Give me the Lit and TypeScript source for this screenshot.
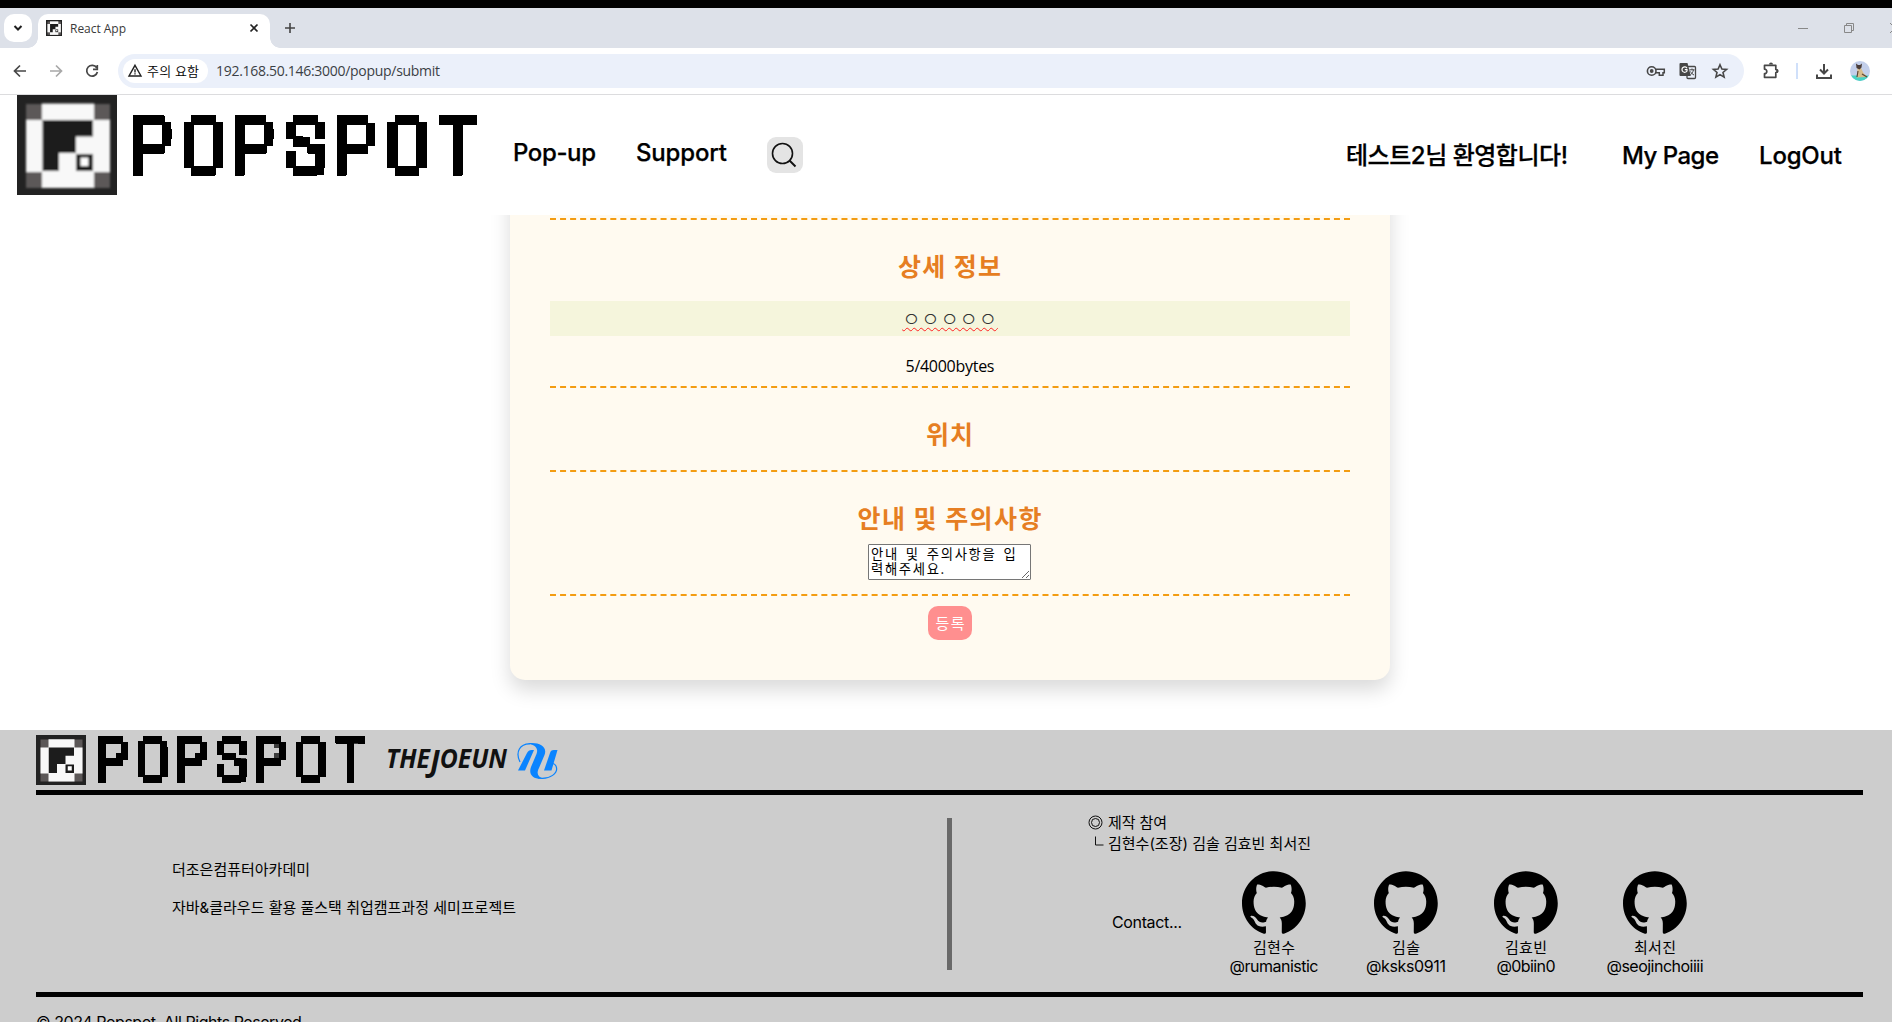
import { LitElement, html, css, svg } from "lit";
import { customElement, property } from "lit/decorators.js";

/** Inline label whose letter spacing is adjusted so that it spans exactly `w` pixels. */
@customElement("fit-text")
class FitText extends LitElement {
  @property({ type: Number }) w = 0;
  static styles = css`
    :host { display: inline-block; white-space: nowrap; flex: none; }
    .run { display: inline-block; white-space: pre; }
  `;
  firstUpdated() {
    const run = this.renderRoot.querySelector(".run") as HTMLElement;
    const n = Math.max(1, (this.textContent ?? "").length - 1);
    const natural = run.getBoundingClientRect().width;
    this.style.width = `${this.w}px`;
    run.style.letterSpacing = `${(this.w - natural) / n}px`;
  }
  render() {
    return html`<span class="run"><slot></slot></span>`;
  }
}

/** Square pixel-art emblem. */
@customElement("pop-mark")
class PopMark extends LitElement {
  static styles = css`
    :host { display: block; flex: none; }
    svg { display: block; width: 100%; height: 100%; }
  `;
  render() {
    return html`<svg viewBox="0 0 100 100">
      <defs><filter id="soft"><feGaussianBlur stdDeviation="0.8" /></filter></defs>
      <rect width="100" height="100" fill="#222" />
      <g filter="url(#soft)">
        <rect x="9" y="9" width="84" height="84" fill="#5c5959" />
        <rect x="25" y="8.500" width="52" height="84.500" fill="#f8f8f8" />
        <rect x="9" y="25" width="84" height="52" fill="#f8f8f8" />
        <path d="M25.500 25H76V41.500H59V58H42V76H25.500z" fill="#1c1c1c" />
        <rect x="59" y="59" width="17" height="17" fill="#1c1c1c" />
        <rect x="63.500" y="62.500" width="8" height="8.500" fill="#fff" />
      </g>
    </svg>`;
  }
}

/** Per-letter horizontal scale, vertical scale and offset of the letter centre. */
const LETTERS: Record<string, [number, number, number]> = {
  P: [0.85, 1, -1.4],
  O: [0.81, 1.03, 0],
  S: [0.87, 1.01, 0],
  T: [0.72, 1, 0],
};

/** Wordmark: thin text sampled on a 5x8 grid per letter and thickened to square pixels. */
@customElement("pop-word")
class PopWord extends LitElement {
  /** Growth of straight letters before sampling. */
  @property() straight = "1.3 1.3";
  /** Growth of round letters before sampling. */
  @property() round = "2 1.6";
  static styles = css`
    :host { display: block; flex: none; }
    svg { display: block; width: 100%; height: 100%; overflow: visible; }
    text { font-family: Roboto, "Liberation Sans", sans-serif; font-weight: 100; font-size: 74.5px; }
  `;
  render() {
    const letters = (set: string) =>
      [..."POPSPOT"].map((ch, i) => {
        if (!set.includes(ch)) return null;
        const [sx, sy, dx] = LETTERS[ch];
        return svg`<text text-anchor="middle" y="26.4" transform="translate(${19.5 + dx + 50.9 * i} 30.1) scale(${sx} ${sy})">${ch}</text>`;
      });
    return html`<svg viewBox="0 0 345 61">
      <defs>
        <filter id="grow" filterUnits="userSpaceOnUse" x="-10" y="-10" width="370" height="85">
          <feMorphology operator="dilate" radius=${this.straight} />
        </filter>
        <filter id="growround" filterUnits="userSpaceOnUse" x="-10" y="-10" width="370" height="85">
          <feMorphology operator="dilate" radius=${this.round} />
        </filter>
        <filter id="pixel" filterUnits="userSpaceOnUse" x="-10" y="-10" width="370" height="85">
          <feComponentTransfer><feFuncA type="linear" slope="60" intercept="-19" /></feComponentTransfer>
          <feMorphology operator="dilate" radius="4" />
        </filter>
        <pattern id="dots" patternUnits="userSpaceOnUse" x="1.365" y="1.065" width="7.27" height="7.27">
          <rect x="2.735" y="2.735" width="1.8" height="1.8" fill="#fff" />
        </pattern>
        <mask id="grid" maskUnits="userSpaceOnUse" x="-10" y="-10" width="370" height="85">
          <rect x="-10" y="-10" width="370" height="85" fill="url(#dots)" />
        </mask>
      </defs>
      <g filter="url(#pixel)"><g mask="url(#grid)">
        <g filter="url(#grow)">${letters("PT")}</g>
        <g filter="url(#growround)">${letters("OS")}</g>
      </g></g>
    </svg>`;
  }
}

const OCTOCAT =
  "M48.854 0C21.839 0 0 22 0 49.217c0 21.756 13.993 40.172 33.405 46.69 2.427.49 3.316-1.059 3.316-2.362 0-1.141-.08-5.052-.08-9.127-13.59 2.934-16.42-5.867-16.42-5.867-2.184-5.704-5.42-7.17-5.42-7.17-4.448-3.015.324-3.015.324-3.015 4.934.326 7.523 5.052 7.523 5.052 4.367 7.496 11.404 5.378 14.235 4.074.404-3.178 1.699-5.378 3.074-6.6-10.839-1.141-22.243-5.378-22.243-24.283 0-5.378 1.94-9.778 5.014-13.2-.485-1.222-2.184-6.275.486-13.038 0 0 4.125-1.304 13.426 5.052a46.97 46.97 0 0 1 12.214-1.63c4.125 0 8.33.571 12.213 1.63 9.302-6.356 13.427-5.052 13.427-5.052 2.67 6.763.97 11.816.485 13.038 3.155 3.422 5.015 7.822 5.015 13.2 0 18.905-11.404 23.06-22.324 24.283 1.78 1.548 3.316 4.481 3.316 9.126 0 6.6-.08 11.897-.08 13.526 0 1.304.89 2.853 3.316 2.364 19.412-6.52 33.405-24.935 33.405-46.691C97.707 22 75.788 0 48.854 0z";

const icons: Record<string, unknown> = {
  chevron: svg`<path d="M6.500 8l3.500 3.500L13.500 8" stroke-width="2" />`,
  close: svg`<path d="M6.500 6.500l7 7M13.500 6.500l-7 7" stroke-width="1.700" />`,
  plus: svg`<path d="M10 5v10M5 10h10" stroke-width="1.600" />`,
  back: svg`<path d="M16 10H5M10 4.500L4.500 10l5.500 5.500" stroke-width="1.700" />`,
  forward: svg`<path d="M4 10h11M10 4.500L15.500 10 10 15.500" stroke-width="1.700" />`,
  reload: svg`<path d="M14.700 6.800A5.400 5.400 0 1 0 15.400 11M15.300 4v4.300H11" stroke-width="1.700" />`,
  warn: svg`<path d="M10 4.300L16 15H4z M10 8.200v3.200M10 12.300v1.300" stroke-width="1.400" />`,
  key: svg`<circle cx="5.700" cy="10" r="4.300" stroke-width="1.600" /><circle cx="5.700" cy="10" r="1.900" fill="currentColor" stroke="none" /><path d="M9.500 8.300H18.300V11.700H17V14.300H13.300V11.700H9.500" stroke-width="1.500" />`,
  star: svg`<path d="M10 3.700l1.900 4.300 4.700.4-3.600 3.100 1.100 4.600L10 13.600l-4.100 2.500L7 11.500 3.400 8.400l4.700-.4z" stroke-width="1.600" />`,
  puzzle: svg`<path d="M3.500 4.300H14.800V8.500a1.600 1.600 0 0 1 0 3.200V16.300H3.500V12.700a2.300 2.300 0 0 0 0-4.600z" stroke-width="1.700" stroke-linejoin="round" /><path d="M8 3.600a2 2 0 0 1 4 0zM15.500 8a2 2 0 0 1 0 4.200z" fill="currentColor" stroke="none" />`,
  download: svg`<path d="M10 3v9M6 8.500l4 4 4-4M3 13.500V17H17V13.500" stroke-width="2" />`,
  restore: svg`<path d="M5.500 7.500h7v7h-7zM7.500 7.500v-2h7v7h-2" stroke-width="1" />`,
};

const icon = (name: string) => html`<svg class="ico" viewBox="0 0 20 20">${icons[name]}</svg>`;

const people = [
  { name: "김현수", nw: 42, id: "@rumanistic", w: 89, cls: "p1" },
  { name: "김솔", nw: 28, id: "@ksks0911", w: 80, cls: "p2" },
  { name: "김효빈", nw: 42, id: "@0biin0", w: 59, cls: "p3" },
  { name: "최서진", nw: 42, id: "@seojinchoiiii", w: 97, cls: "p4" },
];

@customElement("app-root")
class AppRoot extends LitElement {
  static styles = css`
    :host { display: block; height: 1022px; overflow: hidden; background: #fff; color: #000;
      font-family: Inter, "Noto Sans CJK KR", sans-serif; }
    * { box-sizing: border-box; }
    .page { width: 1892px; height: 1022px; overflow: hidden; display: flex; flex-direction: column; }
    .ico { width: 20px; height: 20px; display: block; flex: none; fill: none; stroke: currentColor; }
    .sys { font-family: "Open Sans", "Noto Sans CJK KR", sans-serif; }

    /* browser frame */
    .strip { height: 48px; flex: none; border-top: 8px solid #000; background: #dde1e9; display: flex; align-items: flex-start; padding: 6px 0 0 4px; color: #333; }
    .tabs { width: 28px; height: 28px; border-radius: 10px; background: #fff; display: grid; place-items: center; color: #1f1f1f; }
    .tab { position: relative; margin-left: 6px; width: 232px; height: 34px; border-radius: 10px 10px 0 0; background: #fff; display: flex; align-items: center; padding: 0 6px 6px 8px; color: #222; }
    .tab::before, .tab::after { content: ""; position: absolute; bottom: 0; width: 10px; height: 10px; }
    .tab::before { left: -10px; background: radial-gradient(circle at 0 0, transparent 9.5px, #fff 10px); }
    .tab::after { right: -10px; background: radial-gradient(circle at 100% 0, transparent 9.5px, #fff 10px); }
    .fav { width: 16px; height: 16px; }
    .title { margin-left: 8px; flex: 1; font-size: 12px; line-height: 18px; padding-top: 2px; color: #3a3a3a; }
    .plus { margin: 4px 0 0 10px; color: #444; }
    .win { margin-left: auto; display: flex; padding-top: 4px; color: #888; width: 100px; flex: none; overflow: hidden; }
    .min { width: 10px; height: 1px; flex: none; background: #888; margin: 10px 31px 0 6px; }
    .wclose { margin-left: 26px; flex: none; }
    .bar { height: 47px; flex: none; border-bottom: 1px solid #dcdcde; display: flex; align-items: center; padding: 0 22px 0 10px; color: #474747; }
    .fwd { margin: 0 16px; color: #a8a8a8; }
    .omni { margin-left: 16px; width: 1626px; height: 34px; border-radius: 17px; background: #ebf0fa; display: flex; align-items: center; padding: 0 14px 0 5px; }
    .chip { height: 24px; width: 85px; border-radius: 12px; background: #fff; display: flex; align-items: center; padding-left: 2px; font-size: 13px; color: #222; line-height: 20px; }
    .chip fit-text { margin-left: 2px; font-weight: 350; color: #000; }
    .url { margin-left: 8px; flex: 1; font-size: 14px; line-height: 20px; color: #3b3f45; }
    .g { width: 20px; height: 20px; margin: 0 12px; }
    .puz { margin-left: 17px; }
    .sep { width: 2px; height: 16px; background: #d0e0fa; margin: 0 16px 0 15px; }
    .avatar { width: 20px; height: 20px; margin-left: 16px; flex: none; }

    /* site header */
    .head { height: 120px; flex: none; background: #fff; display: flex; align-items: flex-start; padding-left: 17px; position: relative; z-index: 1; }
    .head .mark { width: 100px; height: 100px; }
    .head .word { width: 345px; height: 61px; margin: 20px 0 0 16px; }
    .nav { display: flex; font-weight: 500; font-size: 24px; line-height: 30px; -webkit-text-stroke: 0.25px #000; }
    .left { margin: 42px 0 0 35px; gap: 40px; flex: 1; align-items: flex-start; }
    .left fit-text { margin-top: 1px; }
    .find { width: 36px; height: 36px; border-radius: 9px; background: #e4e4e4; }
    .find svg { width: 36px; height: 36px; display: block; fill: none; stroke: #111; stroke-width: 1.600; }
    .right { margin-top: 46px; padding-right: 50px; }
    .hello { margin-right: 54px; }
    .my { margin-right: 40px; }

    /* form card */
    .main { height: 515px; flex: none; padding: 0 0 50px 510px; }
    .card { width: 880px; height: 525px; margin-top: -60px; border-radius: 15px; background: #fffaf0; box-shadow: 0 10px 20px rgba(0, 0, 0, 0.15); padding: 63px 40px 0; display: flex; flex-direction: column; align-items: center; }
    .rule { width: 800px; height: 2px; flex: none; border-top: 2px dashed #f39c12; }
    .r3 { margin-top: 19px; }
    .r4 { margin-top: 14px; }
    h2 { margin: 27px 0 0; font-family: "Noto Sans CJK KR", sans-serif; font-weight: 700; font-size: 25px; line-height: 36px; color: #e67e22; padding-right: 1px; }
    .field { margin-top: 18px; width: 800px; height: 35px; flex: none; background: #f5f5dc; text-align: center; font-size: 20px; line-height: 35px; color: #333; font-weight: 300; font-family: "Noto Sans CJK KR", sans-serif; }
    .typo { text-decoration: underline wavy #f22 1.2px; text-underline-offset: 0; text-decoration-skip-ink: none; letter-spacing: 0.750px; }
    .count { margin-top: 20px; height: 30px; font-size: 16px; line-height: 20px; }
    textarea { margin: 9px 1px 0 0; width: 163px; height: 36px; flex: none; padding: 1px 2px 2px; border: 1px solid #767676; border-radius: 1px; background: #fff; color: #000; font: 13.333px/15px "Noto Sans CJK KR", monospace; letter-spacing: 1.650px; word-spacing: 2.400px; overflow: hidden; }
    button { margin-top: 10px; width: 44px; height: 34px; flex: none; border: 0; border-radius: 10px; padding: 0; background: #ff8f8f; color: #fff; font-size: 15px; line-height: 34px; }

    /* footer */
    .foot { height: 292px; flex: none; background: #cdcdcd; padding: 5px 29px 0 36px; display: flex; flex-direction: column; }
    .brand { height: 60px; flex: none; border-bottom: 5px solid #000; display: flex; }
    .foot .mark { width: 50px; height: 50px; }
    .foot .word { width: 268px; height: 47.400px; margin: 1px 0 0 12px; filter: drop-shadow(0 0 0.600px #fff) drop-shadow(0 0 0.500px #fff); }
    .joeun { width: 180px; height: 48px; margin: 4px 0 0 18px; overflow: visible; }
    .joeun text { font-family: "Open Sans", "Noto Sans", sans-serif; font-weight: 700; font-style: italic; fill: #111; }
    .info { height: 202px; flex: none; border-bottom: 5px solid #000; display: flex; font-size: 15px; }
    .about { width: 775px; margin-left: 136px; padding-top: 65px; display: flex; flex-direction: column; gap: 18px; line-height: 20px; }
    .vline { width: 5px; height: 152px; margin-top: 23px; background: #696969; }
    .credit { margin: 17px 0 0 136px; }
    .made { line-height: 21px; display: flex; flex-direction: column; align-items: flex-start; }
    .made div { display: flex; }
    .sym { width: 20px; height: 21px; flex: none; display: flex; align-items: center; }
    .sym svg { width: 20px; height: 21px; fill: none; stroke: #111; }
    .team { display: flex; align-items: flex-start; margin-top: 17px; }
    .contact { margin: 42px 0 0 24px; line-height: 18px; font-size: 16px; }
    .person { display: flex; flex-direction: column; align-items: center; font-size: 16px; line-height: 19px; width: 100px; }
    .person svg { width: 64px; height: 63px; margin-bottom: 4px; }
    .person .nm { font-size: 15px; line-height: 19px; }
    .p1 { margin-left: 42px; } .p2 { margin-left: 32px; } .p3 { margin-left: 20px; } .p4 { margin-left: 29px; }
    .copy { padding-top: 15px; font-size: 16px; line-height: 20px; white-space: nowrap; }
  `;

  private chrome() {
    return html`
      <div class="strip sys">
        <div class="tabs">${icon("chevron")}</div>
        <div class="tab">
          <pop-mark class="fav"></pop-mark>
          <div class="title"><fit-text w="56">React App</fit-text></div>
          ${icon("close")}
        </div>
        <div class="plus">${icon("plus")}</div>
        <div class="win">
          <div class="min"></div>
          ${icon("restore")}
          <svg class="ico wclose" viewBox="0 0 20 20"><path d="M5 5l10 10M15 5L5 15" /></svg>
        </div>
      </div>
      <div class="bar sys">
        ${icon("back")}
        <div class="fwd">${icon("forward")}</div>
        ${icon("reload")}
        <div class="omni">
          <div class="chip">${icon("warn")}<fit-text w="52">주의 요함</fit-text></div>
          <div class="url"><fit-text w="224">192.168.50.146:3000/popup/submit</fit-text></div>
          ${icon("key")}
          <svg class="g" viewBox="0 0 20 20">
            <rect x="9" y="5.500" width="8.500" height="12" rx="1" fill="none" stroke="#474747" stroke-width="1.300" />
            <path d="M2.500 2H9.500L12.800 15H2.500a1 1 0 0 1-1-1V3a1 1 0 0 1 1-1z" fill="#474747" />
            <path d="M9 7.200A2.700 2.700 0 1 0 9 10V8.700H6.800" fill="none" stroke="#fff" stroke-width="1.200" />
            <path d="M11.500 8.800h5M14 7.500v1.300M15.500 8.800c-.5 2.500-2 4-3 5M12.500 10.500c.5 1.300 2 2.800 3.500 3.500" fill="none" stroke="#474747" stroke-width="1" />
          </svg>
          ${icon("star")}
        </div>
        <div class="puz">${icon("puzzle")}</div>
        <div class="sep"></div>
        ${icon("download")}
        <svg class="avatar" viewBox="0 0 20 20">
          <defs><clipPath id="round"><circle cx="10" cy="10" r="10" /></clipPath></defs>
          <g clip-path="url(#round)">
            <rect width="20" height="20" fill="#c3cfea" />
            <rect y="14.500" width="20" height="6" fill="#48d3c4" />
            <path d="M7.500 7h3.500l2.500 5 3.500 4-10 .5z" fill="#d8bd8c" />
            <path d="M6 2.500l2 1.500h2l2-1.500-.5 4L9.500 8.500 6.500 7z" fill="#493c38" />
            <path d="M8 10l-1 6M12 13l5 3" stroke="#5b4536" stroke-width="1.200" />
          </g>
        </svg>
      </div>`;
  }

  render() {
    return html`<div class="page">
      ${this.chrome()}
      <header class="head">
        <pop-mark class="mark"></pop-mark>
        <pop-word class="word"></pop-word>
        <nav class="nav left">
          <fit-text w="83">Pop-up</fit-text>
          <fit-text w="91">Support</fit-text>
          <div class="find"><svg viewBox="0 0 36 36"><circle cx="15.500" cy="16.500" r="10" /><path d="M22.500 23.500l6 6" stroke-width="1.900" /></svg></div>
        </nav>
        <nav class="nav right">
          <fit-text class="hello" w="222">테스트2님 환영합니다!</fit-text>
          <fit-text class="my" w="97">My Page</fit-text>
          <fit-text w="83">LogOut</fit-text>
        </nav>
      </header>
      <main class="main">
        <section class="card">
          <div class="rule"></div>
          <h2><fit-text w="103">상세 정보</fit-text></h2>
          <div class="field"><span class="typo">ㅇㅇㅇㅇㅇ</span></div>
          <div class="count sys"><fit-text w="89">5/4000bytes</fit-text></div>
          <div class="rule"></div>
          <h2><fit-text w="47">위치</fit-text></h2>
          <div class="rule r3"></div>
          <h2><fit-text w="184">안내 및 주의사항</fit-text></h2>
          <textarea spellcheck="false" .value=${"안내 및 주의사항을 입력해주세요."}></textarea>
          <div class="rule r4"></div>
          <button class="sys"><fit-text w="29">등록</fit-text></button>
        </section>
      </main>
      <footer class="foot">
        <div class="brand">
          <pop-mark class="mark"></pop-mark>
          <pop-word class="word" straight="1.6 2.4" round="1.6 2.4"></pop-word>
          <svg class="joeun" viewBox="0 0 180 48">
            <text x="2" y="29" font-size="26" textLength="121" lengthAdjust="spacingAndGlyphs">THE<tspan font-size="31" dy="4">J</tspan><tspan dy="-4">OEUN</tspan></text>
            <g fill="#0a84ff">
              <path d="M134 31.500H141L150 11H147.500C145.500 11 144 12 143 14z" />
              <path d="M160 31.500H167.500L173.500 11H170C167.500 11 166.500 12 166 14z" />
              <path d="M143 4.500C154 2.500 164 7 160.500 16L155 29C152 35 154 38.500 160 39.500C150 41 144 36 147 28L152.500 15C155 8.500 150 5.500 143 4.500z" />
              <path d="M136 23C131 13 136 4.500 146 4.800M154 39C166 41 175 34 172 27Q171 25 169 24.500" fill="none" stroke="#0a84ff" stroke-width="1.200" />
            </g>
          </svg>
        </div>
        <div class="info">
          <div class="about">
            <fit-text w="138">더조은컴퓨터아카데미</fit-text>
            <fit-text w="344">자바&amp;클라우드 활용 풀스택 취업캠프과정 세미프로젝트</fit-text>
          </div>
          <div class="vline"></div>
          <div class="credit">
            <div class="made">
              <div><span class="sym"><svg viewBox="0 0 20 21"><circle cx="7.500" cy="10.500" r="6.500" /><circle cx="7.500" cy="10.500" r="4" /></svg></span><fit-text w="59">제작 참여</fit-text></div>
              <div><span class="sym"><svg viewBox="0 0 20 21"><path d="M7.500 3.500v8.500h8" /></svg></span><fit-text w="203">김현수(조장) 김솔 김효빈 최서진</fit-text></div>
            </div>
            <div class="team">
              <fit-text class="contact" w="70">Contact...</fit-text>
              ${people.map(
                (p) => html`<div class="person ${p.cls}">
                  <svg viewBox="0 0 98 96"><path d=${OCTOCAT} /></svg>
                  <fit-text class="nm" w=${p.nw}>${p.name}</fit-text>
                  <fit-text w=${p.w}>${p.id}</fit-text>
                </div>`,
              )}
            </div>
          </div>
        </div>
        <div class="copy"><fit-text w="270">© 2024 Popspot. All Rights Reserved.</fit-text></div>
      </footer>
    </div>`;
  }
}
